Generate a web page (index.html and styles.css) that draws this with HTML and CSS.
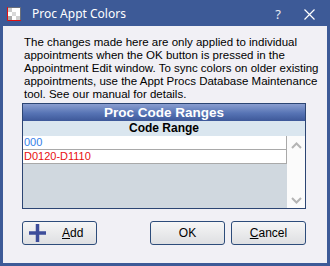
FILE: index.html
```html
<!DOCTYPE html>
<html lang="en">
<head>
    <meta charset="UTF-8">
    <title>Proc Appt Colors</title>
    <link rel="stylesheet" href="styles.css">
</head>
<body>
    <div class="window">
        <div class="titlebar">
            <svg class="app-icon" width="14" height="14" viewBox="0 0 14 14">
                <rect x="0" y="0" width="14" height="14" fill="#6b6f7a"/>
                <rect x="1" y="1" width="4" height="4" fill="#c8c8c8"/>
                <rect x="5" y="1" width="4" height="4" fill="#ffffff"/>
                <rect x="9" y="1" width="4" height="4" fill="#ffffff"/>
                <rect x="1" y="5" width="4" height="4" fill="#ffffff"/>
                <rect x="5" y="5" width="4" height="4" fill="#d8d8d8"/>
                <rect x="9" y="5" width="4" height="4" fill="#ffffff"/>
                <rect x="1" y="9" width="4" height="4" fill="#a8a8a8"/>
                <rect x="5" y="9" width="4" height="4" fill="#ffffff"/>
                <rect x="9" y="9" width="4" height="4" fill="#d0d0d0"/>
                <path d="M0.5 0 V13.5 H14" stroke="#e01010" stroke-width="1" fill="none"/>
            </svg>
            <span class="title">Proc Appt Colors</span>
            <span class="help">?</span>
            <svg class="close" width="11" height="11" viewBox="0 0 11 11">
                <path d="M0.5 0.5 L10.5 10.5 M10.5 0.5 L0.5 10.5" stroke="#ffffff" stroke-width="1.2"/>
            </svg>
        </div>

        <div class="client">
            <p class="note">The changes made here are only applied to individual<br>appointments when the OK button is pressed in the<br>Appointment Edit window. To sync colors on older existing<br>appointments, use the Appt Procs Database Maintenance<br>tool. See our manual for details.</p>

            <div class="grid">
                <div class="grid-title">Proc Code Ranges</div>
                <div class="grid-head">Code Range</div>
                <div class="grid-body">
                    <div class="rows">
                        <div class="row blue">000</div>
                        <div class="row red">D0120-D1110</div>
                    </div>
                    <div class="scroll">
                        <svg width="11" height="7" viewBox="0 0 11 7"><path d="M1 6 L5.5 1.5 L10 6" stroke="#b4b4b4" stroke-width="2" fill="none"/></svg>
                        <svg width="11" height="7" viewBox="0 0 11 7"><path d="M1 1 L5.5 5.5 L10 1" stroke="#b4b4b4" stroke-width="2" fill="none"/></svg>
                    </div>
                </div>
            </div>

            <div class="buttons">
                <button class="btn btn-add">
                    <svg width="17" height="18" viewBox="0 0 17 18"><path d="M0 9 H17 M8.5 0 V18" stroke="#3d4d9a" stroke-width="3.5"/></svg>
                    <span><u>A</u>dd</span>
                </button>
                <div class="spacer"></div>
                <button class="btn">OK</button>
                <button class="btn"><u>C</u>ancel</button>
            </div>
        </div>
    </div>
</body>
</html>
```

FILE: styles.css
```css
* { margin: 0; padding: 0; box-sizing: border-box; }
body { font-family: "Liberation Sans", Arial, sans-serif; background: #3d5a97; }

.window { width: 330px; height: 266px; background: #3d5a97; padding: 0 3px 3px 3px; display: flex; flex-direction: column; }

.titlebar { height: 26px; display: flex; align-items: center; color: #fff; }
.app-icon { margin-left: 4px; margin-top: 2px; }
.title { font-family: "Noto Sans", "Open Sans", sans-serif; font-size: 12px; margin-left: 11px; margin-top: 1px; }
.help { font-family: "Noto Sans", sans-serif; font-size: 13px; margin-left: auto; margin-top: 2px; color: #e8eaf2; }
.close { margin-left: 23px; margin-right: 12px; margin-top: 2px; }

.client { flex: 1; background: #f1f0f5; padding: 10px 0 0 19px; }
.note { font-size: 11.5px; line-height: 13px; color: #000; padding-left: 2px; white-space: nowrap; }

.grid { width: 284px; height: 106px; margin-top: 2px; border: 1px solid #2c4573; display: flex; flex-direction: column; }
.grid-title { height: 17px; background: linear-gradient(#8a9ed0, #5673b4 55%, #3d5899); color: #fff; font-weight: bold; font-size: 13.5px; line-height: 17px; text-align: center; }
.grid-head { height: 15px; background: #dae6ef; font-weight: bold; font-size: 12px; line-height: 15px; text-align: center; color: #000; }
.grid-body { flex: 1; display: flex; }
.rows { flex: 1; background: #d0d8df; }
.row { height: 14px; background: #fff; border-bottom: 1px solid #a9a9a9; border-right: 1px solid #a9a9a9; font-size: 11px; line-height: 13px; padding-left: 1px; }
.row.blue { color: #3580e8; }
.row.red { color: #e81010; }
.scroll { width: 18px; background: #fbfbfb; display: flex; flex-direction: column; justify-content: space-between; align-items: center; padding: 6px 0 4px; }

.buttons { display: flex; width: 284px; margin-top: 12px; gap: 6px; }
.spacer { flex: 1; }
.btn { width: 75px; height: 24px; border: 1px solid #2d4c7a; border-radius: 3px; background: linear-gradient(#f6f6f6, #dedfe2); font-family: "Liberation Sans", Arial, sans-serif; font-size: 12px; color: #000; display: flex; align-items: center; justify-content: center; }
.btn-add { justify-content: flex-start; padding-left: 6px; }
.btn-add span { margin-left: 16px; }
```
